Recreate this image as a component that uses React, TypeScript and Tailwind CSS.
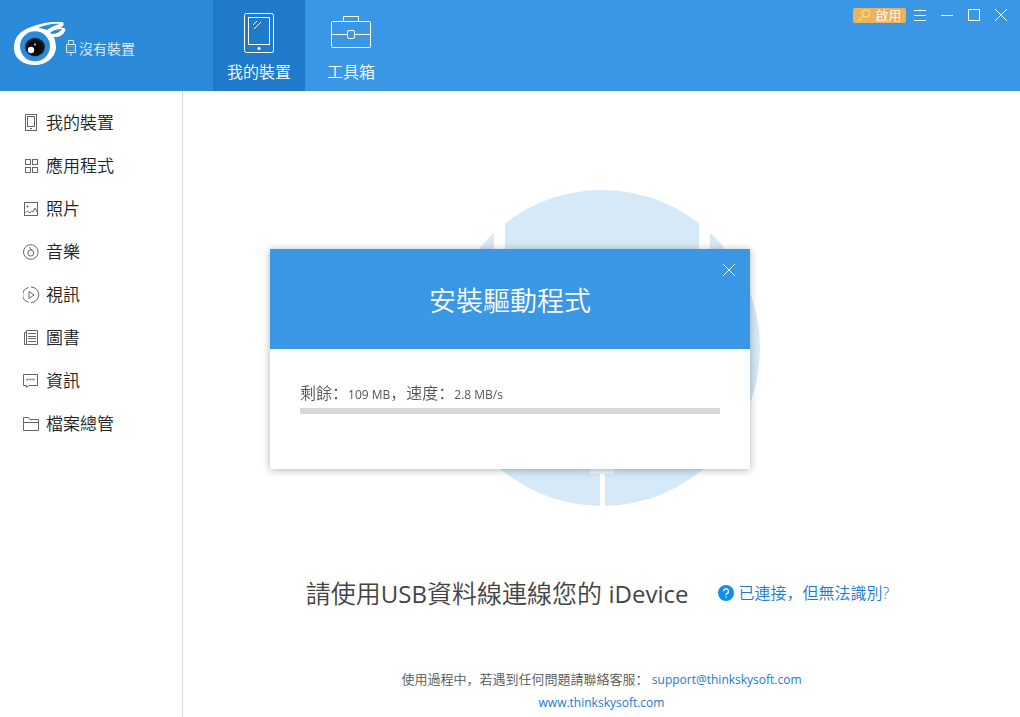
import type { ReactNode } from 'react';

interface MenuItem {
  label: string;
  icon: ReactNode;
}

const menuItems: MenuItem[] = [
  {
    label: '我的裝置',
    icon: (
      <>
        <rect x="2.5" y="0.5" width="11" height="16" />
        <rect x="4.5" y="2.5" width="7" height="10" />
        <path d="M7 14.5h2" />
      </>
    ),
  },
  {
    label: '應用程式',
    icon: (
      <>
        <rect x="2.5" y="2.5" width="5" height="5" />
        <rect x="9.5" y="2.5" width="5" height="5" />
        <rect x="2.5" y="10.5" width="5" height="5" />
        <rect x="9.5" y="10.5" width="5" height="5" />
      </>
    ),
  },
  {
    label: '照片',
    icon: (
      <>
        <rect x="1.5" y="2.5" width="13" height="13" />
        <circle cx="4.5" cy="6.5" r="0.7" />
        <path d="M2.5 12.5l2-1.5 2.5 2 1.5-2 1.5 1 2-4 2 4" />
      </>
    ),
  },
  {
    label: '音樂',
    icon: (
      <>
        <circle cx="7.8" cy="9" r="7.3" />
        <circle cx="7.8" cy="10" r="3" />
        <path d="M10 8C9 6 7 7 6.5 4" />
      </>
    ),
  },
  {
    label: '視訊',
    icon: (
      <>
        <path d="M5.5 1.6A7.5 7.5 0 0 0 5.5 16.2M8 1a7.5 7.5 0 0 1 0 15.6" />
        <path d="M6 5.5v7l5-3.5z" />
      </>
    ),
  },
  {
    label: '圖書',
    icon: (
      <>
        <path d="M3.5 1.5h11v14h-11zM3.5 3.5h-2v12h3" />
        <path d="M5 4.5h8M5 7.5h8M5 9.5h8M5 12.5h8" />
      </>
    ),
  },
  {
    label: '資訊',
    icon: (
      <>
        <path d="M0.5 2.5h14v11H6l-2.5 2v-2h-3z" />
        <path d="M3.5 7.5h2M6.5 7.5h2M9.5 7.5h2" strokeWidth="1.6" />
      </>
    ),
  },
  {
    label: '檔案總管',
    icon: <path d="M0.5 15.5v-13h5l1.5 2h8.5v11zM0.5 7.5h15" />,
  },
];

function Logo() {
  return (
    <svg width="54" height="48" viewBox="0 0 54 48" aria-hidden="true">
      <defs>
        <radialGradient id="pupil" cx="50%" cy="55%" r="55%">
          <stop offset="0" stopColor="#000" />
          <stop offset="0.7" stopColor="#111" />
          <stop offset="1" stopColor="#2c333a" />
        </radialGradient>
      </defs>
      <path
        d="M1 28C0 17 6 9 18 5 28 1 40-1 49 0 52 1 51 4 47 6 53 5 54 8 50 12 47 15 44 15 41 15 42 18 43 22 43 26 42 36 33 43 22 43 11 43 2 37 1 28z"
        fill="#fff"
      />
      <circle cx="22" cy="24.3" r="15" fill="#2b8ad9" />
      <path d="M25 6C32 3 40 1 47 2 42 3 38 5 34 8 31 7 28 6 25 6z" fill="#2b8ad9" />
      <path d="M37 11C40 8 44 7 49 7 47 10 43 12 39 12z" fill="#2b8ad9" />
      <ellipse cx="22" cy="25" rx="10" ry="9.3" fill="url(#pupil)" />
      <circle cx="18" cy="28" r="3.2" fill="#fff" />
      <circle cx="22" cy="22.5" r="1" fill="#ddd" />
    </svg>
  );
}

function Header() {
  return (
    <header className="flex h-[91px] bg-[#3997e5] text-white">
      <div className="flex w-[213px] shrink-0 items-center bg-[#2b8ad9] pl-[13px]">
        <Logo />
        <svg className="-ml-0.5 mt-1" width="12" height="16" viewBox="0 0 12 16" fill="none" stroke="#d5e8f8" aria-hidden="true">
          <path d="M3.5 4V0.5h5V4M1.5 4.5h9v8h-9zM6 13v3" />
          <path d="M3 6.5h6v4H3z" opacity="0.3" />
        </svg>
        <span className="ml-0.5 mt-1.5 text-sm text-[#e3f0fb]">沒有裝置</span>
      </div>
      <nav className="flex">
        <button className="flex w-[92px] flex-col items-center bg-[#1f7acb] pt-3">
          <svg width="30" height="42" viewBox="0 0 30 42" fill="none" stroke="currentColor" aria-hidden="true">
            <rect x="0.5" y="1.5" width="29" height="39" rx="2" />
            <rect x="4.5" y="5.5" width="21" height="27" />
            <path d="M9 13l4-4M10 17l7-7" />
            <circle cx="15" cy="36.5" r="1.2" fill="currentColor" />
          </svg>
          <span className="mt-1.5 text-base leading-6">我的裝置</span>
        </button>
        <button className="flex w-[92px] flex-col items-center pt-3">
          <svg width="40" height="42" viewBox="0 0 40 42" fill="none" stroke="currentColor" aria-hidden="true">
            <rect x="0.5" y="9.5" width="39" height="26" rx="1" />
            <path d="M12.5 9V4.5h15V9M1 22.5h15M24 22.5h15" />
            <rect x="16.5" y="18.5" width="7" height="8" rx="1.5" />
          </svg>
          <span className="mt-1.5 text-base leading-6">工具箱</span>
        </button>
      </nav>
      <div className="ml-auto flex h-[30px] items-center pr-1.5">
        <button className="flex h-[15px] w-[53px] items-center justify-center gap-1 rounded-xs bg-[#ecb25e] text-[13px] leading-none">
          <svg width="14" height="13" viewBox="0 0 14 13" fill="none" stroke="#fff27a" aria-hidden="true">
            <circle cx="9" cy="4.5" r="3.7" />
            <path d="M6.3 7.2L1 12M3 10.2l1.8 1.6" />
          </svg>
          啟用
        </button>
        <button className="flex w-[27px] justify-center" aria-label="選單">
          <svg width="12" height="12" viewBox="0 0 12 12" stroke="currentColor">
            <path d="M0 1.5h12M0 6.5h12M0 11.5h12" />
          </svg>
        </button>
        <button className="flex w-[27px] justify-center" aria-label="最小化">
          <svg width="12" height="12" viewBox="0 0 12 12" stroke="currentColor">
            <path d="M0 6.5h12" />
          </svg>
        </button>
        <button className="flex w-[27px] justify-center" aria-label="最大化">
          <svg width="12" height="12" viewBox="0 0 12 12" fill="none" stroke="currentColor">
            <rect x="0.5" y="0.5" width="11" height="11" />
          </svg>
        </button>
        <button className="flex w-[27px] justify-center" aria-label="關閉">
          <svg width="12" height="12" viewBox="0 0 12 12" stroke="currentColor">
            <path d="M0 0l12 12M12 0L0 12" />
          </svg>
        </button>
      </div>
    </header>
  );
}

function Sidebar() {
  return (
    <aside className="w-[183px] shrink-0 border-r border-[#dcdcdc] pt-2.5">
      <ul>
        {menuItems.map((item) => (
          <li key={item.label}>
            <button className="flex h-[43px] w-full items-center gap-1.5 pl-[23px] text-[17px] text-[#222]">
              <svg width="17" height="18" viewBox="0 0 17 18" fill="none" stroke="#666" aria-hidden="true">
                {item.icon}
              </svg>
              {item.label}
            </button>
          </li>
        ))}
      </ul>
    </aside>
  );
}

function DeviceArt() {
  return (
    <svg width="316" height="316" viewBox="0 0 316 316" aria-hidden="true">
      <circle cx="158" cy="158" r="158" fill="#d6e9f9" />
      <path d="M50 0h11v270H50zM255 0h11v270h-11z" fill="#fff" />
      <path d="M146 268h24v16h-24z" fill="#eff6fd" />
      <path d="M156 284h5v32h-5z" fill="#fff" />
    </svg>
  );
}

function DriverDialog() {
  return (
    <div className="fixed inset-0 flex items-center justify-center">
      <section
        role="dialog"
        aria-labelledby="driver-title"
        className="w-[480px] bg-white shadow-[0_1px_8px_rgba(0,0,0,0.3)]"
      >
        <div className="relative flex h-[100px] items-center justify-center bg-[#3997e5] text-white">
          <h2 id="driver-title" className="mt-1 text-[27px] leading-10">安裝驅動程式</h2>
          <button className="absolute right-[15px] top-[15px]" aria-label="關閉">
            <svg width="12" height="12" viewBox="0 0 12 12" stroke="currentColor">
              <path d="M0 0l12 12M12 0L0 12" />
            </svg>
          </button>
        </div>
        <div className="h-[120px] px-[30px] pt-8">
          <p id="driver-progress" className="text-base leading-6 text-[#555]">
            剩餘：<span className="text-xs font-normal">109 MB</span>，速度：<span className="text-xs font-normal">2.8 MB/s</span>
          </p>
          <div
            role="progressbar"
            aria-labelledby="driver-progress"
            aria-valuenow={0}
            className="mt-[3px] h-1.5 bg-[#d8d8d8]"
          />
        </div>
      </section>
    </div>
  );
}

export default function App() {
  return (
    <div className="flex min-h-screen flex-col bg-white font-['Open_Sans','Noto_Sans_CJK_SC',sans-serif] font-[350]">
      <Header />
      <div className="flex grow">
        <Sidebar />
        <main className="flex grow flex-col items-center pt-[99px]">
          <DeviceArt />
          <div className="mt-[67px] flex items-center gap-[30px] pr-2">
            <h1 className="text-[25px] leading-10 text-[#444]">
              請使用<span className="text-2xl font-normal">USB</span>資料線連線您的{' '}
              <span className="text-2xl font-normal">iDevice</span>
            </h1>
            <a href="#help" className="flex items-center gap-1 text-base text-[#1a7bd0]">
              <svg width="16" height="16" viewBox="0 0 16 16" fill="none" aria-hidden="true">
                <circle cx="8" cy="8" r="8" fill="#0f8df0" />
                <path d="M5.5 6.3a2.5 2.5 0 1 1 3.5 2.3C8.2 9 8 9.3 8 10" stroke="#fff" strokeWidth="1.3" />
                <circle cx="8" cy="12" r="0.8" fill="#fff" />
              </svg>
              已連接，但無法識別?
            </a>
          </div>
          <p className="mt-[54px] text-[13px] leading-6 text-[#555]">
            使用過程中，若遇到任何問題請聯絡客服：{' '}
            <a href="mailto:support@thinkskysoft.com" className="text-xs font-normal text-[#1a7bd0]">support@thinkskysoft.com</a>
          </p>
          <a href="#website" className="text-xs leading-6 font-normal text-[#1a7bd0]">www.thinkskysoft.com</a>
        </main>
      </div>
      <DriverDialog />
    </div>
  );
}
